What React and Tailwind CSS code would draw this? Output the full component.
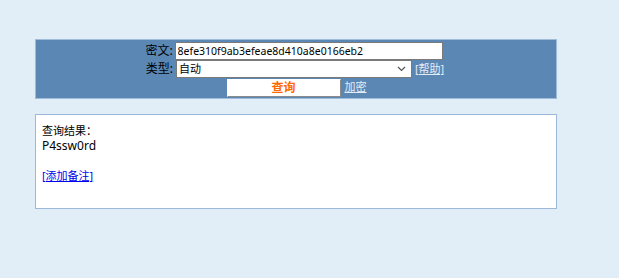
import React from "react";

// Hash lookup page — query panel + result box
const FONT = { fontFamily: '"Noto Sans", "Noto Sans CJK SC", sans-serif' };

export default function App() {
  return (
    <div className="w-[619px] h-[278px] bg-[#e1edf7] pt-[39px] pl-[35px] text-[12px] text-black" style={FONT}>
      {/* Query panel */}
      <div className="w-[522px] h-[60px] bg-[#5b87b4] border border-[#9fbcdb] flex flex-col items-center pt-[2px]">
        <div className="flex items-center h-[18px] mr-[4px]">
          <span className="text-right leading-none">密文:</span>
          <input
            readOnly
            value="8efe310f9ab3efeae8d410a8e0166eb2"
            className="ml-[2px] w-[268px] h-[18px] bg-white border border-[#7a7a7a] px-[2px] text-[10.5px] outline-none"
          />
        </div>
        <div className="flex items-center h-[18px] mr-[2px]">
          <span className="text-right leading-none">类型:</span>
          <div className="relative ml-[3px] w-[236px] h-[18px] bg-white border border-[#7a7a7a] flex items-center px-[2px] text-[11px]">
            <span>自动</span>
            <svg className="absolute right-[5px] top-[5px]" width="9" height="6" viewBox="0 0 9 6" fill="none" stroke="#555" strokeWidth="1.2">
              <path d="M1 1l3.5 3.5L8 1" />
            </svg>
          </div>
          <a className="ml-[3px] text-[11px] text-[#e4ecf5] underline cursor-pointer">[帮助]</a>
        </div>
        <div className="flex items-center h-[19px] ml-[1px]">
          <button className="w-[114px] h-[18px] bg-white border border-t-white border-l-white border-b-[#8a8a8a] border-r-[#8a8a8a] text-[#ff6a00] font-bold text-[12px] leading-none">
            查询
          </button>
          <a className="ml-[4px] text-[11px] text-[#e4ecf5] underline cursor-pointer">加密</a>
        </div>
      </div>

      {/* Result box */}
      <div className="mt-[15px] w-[522px] h-[95px] bg-white border border-[#9db8d9] px-[6px] pt-[8px]">
        <div className="text-[11px] leading-[15px]">查询结果：</div>
        <div className="text-[12px] leading-[16px]">P4ssw0rd</div>
        <div className="mt-[14px] text-[11px] leading-[15px]">
          <a className="text-[#0000ee] underline cursor-pointer">[添加备注]</a>
        </div>
      </div>
    </div>
  );
}
